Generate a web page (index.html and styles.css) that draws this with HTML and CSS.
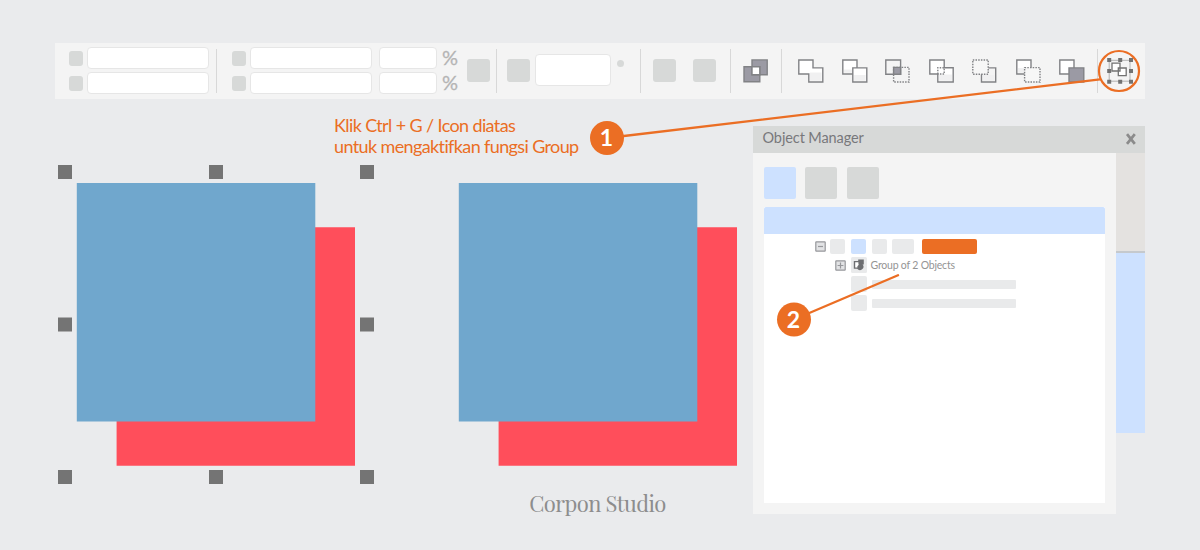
FILE: index.html
```html
<!DOCTYPE html>
<html lang="id">
<head>
<meta charset="utf-8">
<title>Group Objects</title>
<link rel="stylesheet" href="styles.css">
</head>
<body>
<header class="toolbar">
  <div class="pair first"><i class="chip"></i><i class="field"></i><i class="chip"></i><i class="field"></i></div>
  <i class="sep s1"></i>
  <div class="pair second"><i class="chip"></i><i class="field"></i><i class="chip"></i><i class="field"></i></div>
  <div class="percents"><i class="field"></i><span>%</span><i class="field"></i><span>%</span></div>
  <i class="tile t1"></i>
  <i class="sep s2"></i>
  <i class="tile t2"></i>
  <i class="field tall"></i>
  <i class="degree"></i>
  <i class="sep s3"></i>
  <i class="tile t3"></i>
  <i class="tile t4"></i>
  <i class="sep s4"></i>
  <svg class="icon combine" viewBox="0 0 26 24"><path class="dark" d="M9 .9H24.2V15.7H9ZM1 7.7H16.8V22.8H1Z"/><path class="light" d="M9 7.7H16.8V15.7H9Z"/></svg>
  <i class="sep s5"></i>
  <svg class="icon shape1" viewBox="0 0 26 24"><path class="light" d="M.8 1H15V8.9H24.8V23H10.8V15H.8Z"/><path class="shade" d="M12 13.5H23.6V21.8H12Z"/></svg>
  <svg class="icon" viewBox="0 0 26 24"><path class="light" d="M.8 1H15V15H.8Z"/><path class="shade" d="M2 10.5H10V13.8H2Z"/><path class="light" d="M10.8 8.9H24.8V23H10.8Z"/><path class="shade" d="M12 16H23.6V21.8H12Z"/></svg>
  <svg class="icon" viewBox="0 0 26 24"><path class="pale" d="M.8 1H15.6V15.2H.8Z"/><path class="dots" d="M8.6 8.4H24V23H8.6Z"/><path class="dark" d="M8.6 8.4H15.6V15.2H8.6Z"/></svg>
  <svg class="icon" viewBox="0 0 26 24"><path class="light" d="M.8 1H15.2V8.8H24.2V23H8.8V15H.8Z"/><path class="shade" d="M10 15.5H23V21.8H10Z"/><path class="dots" d="M8.8 15V8.8H15.2V15Z"/></svg>
  <svg class="icon" viewBox="0 0 26 24"><path class="pale" d="M9.5 8.9H23.7V23H9.5Z"/><path class="shade" d="M10.7 16H22.5V21.8H10.7Z"/><path class="dots blank" d="M.8 1H16.2V15.2H.8Z"/></svg>
  <svg class="icon" viewBox="0 0 26 24"><path class="light" d="M.8 1H15V15H.8Z"/><path class="shade" d="M2 9H8V13.8H2Z"/><path class="dots blank" d="M8.6 8.6H24V23H8.6Z"/></svg>
  <svg class="icon" viewBox="0 0 26 24"><path class="light" d="M.8 1H15V15H.8Z"/><path class="dark" d="M10 8.9H24.8V23H10Z"/></svg>
  <i class="sep s6"></i>
  <svg class="group-icon" viewBox="0 0 27 27"><path class="guide" d="M3.2 3.3H24V24.2H3.2Z"/><path class="mini" d="M12.3 11H20.2V18.7H12.3ZM6 6.2H14V14H6Z"/><path class="knobs" d="M1.2 1h4v4h-4ZM12.2 1h4v4h-4ZM23 1h4v4h-4ZM1.2 12h4v4h-4ZM23 12h4v4h-4ZM1.2 22.7h4v4h-4ZM12.2 22.7h4v4h-4ZM23 22.7h4v4h-4Z"/></svg>
</header>

<main class="workspace">
  <section class="stage">
    <p class="note">Klik Ctrl + G / Icon diatas<br><span>untuk mengaktifkan fungsi Group</span></p>
    <div class="canvas">
      <svg class="artwork" width="316" height="320" viewBox="58 165 316 320">
        <path class="red" d="M116.6 227.2H355V465.7H116.6Z"/><path class="blue" d="M76.8 183H315.3V421.6H76.8Z"/>
        <path class="handles" d="M58 165h14v14h-14ZM209 165h14v14h-14ZM360 165h14v14h-14ZM58 317.5h14v14h-14ZM360 317.5h14v14h-14ZM58 470h14v14h-14ZM209 470h14v14h-14ZM360 470h14v14h-14Z"/>
      </svg>
      <svg class="artwork" width="279" height="320" viewBox="458 165 279 320">
        <path class="red" d="M498.6 227.2H737V465.7H498.6Z"/><path class="blue" d="M458.8 183H697.3V421.6H458.8Z"/>
      </svg>
    </div>
    <p class="brand">Corpon Studio</p>
  </section>

  <aside class="manager">
    <header class="titlebar"><h1>Object Manager</h1><svg class="close" viewBox="0 0 12 12"><path d="M2 1.2 9.8 10.8M9.8 1.2 2 10.8"/></svg></header>
    <div class="manager-body">
      <div class="content">
        <div class="buttons"><i class="active"></i><i></i><i></i></div>
        <div class="list">
          <div class="list-head"></div>
          <div class="row layer">
            <svg class="toggle" viewBox="0 0 11 11"><rect x=".8" y=".8" width="9.4" height="9.4" rx=".5"/><path d="M3 5.5h5"/></svg>
            <i class="cell"></i><i class="cell selected"></i><i class="cell"></i><i class="cell wide"></i><i class="tag"></i>
          </div>
          <div class="row object">
            <svg class="toggle" viewBox="0 0 11 11"><rect x=".8" y=".8" width="9.4" height="9.4" rx=".5"/><path d="M2.6 5.5h5.8M5.5 2.6v5.8"/></svg>
            <svg class="thumb" viewBox="0 0 16 16"><rect class="plate" width="16" height="16" rx="1.5"/><path d="M2.8 4H7.2V2.6H12.8V7.4H11.6A3.3 3.3 0 1 1 6.2 11.8H2.8Z"/><path class="hole" d="M4.2 5.2H7.4V7.6H8L6.4 9.2V10.4H4.2Z"/></svg>
            <span>Group of 2 Objects</span>
          </div>
          <div class="row child"><i class="cell"></i><i class="line"></i></div>
          <div class="row child"><i class="cell"></i><i class="line"></i></div>
        </div>
      </div>
      <div class="scroll"><i class="track"></i><i class="grip"></i></div>
    </div>
  </aside>
</main>

<svg class="callouts" viewBox="0 0 1200 550">
  <path d="M607 138 1100 79.3M794 319.5 898 275.3"/>
  <circle class="ring" cx="1119" cy="71" r="20"/>
  <circle cx="607" cy="138" r="17"/><circle cx="794" cy="319.5" r="17"/>
  <text x="606.5" y="146">1</text><text x="793.5" y="327.5">2</text>
</svg>
</body>
</html>
```

FILE: styles.css
```css
* { box-sizing: border-box; }
body { margin: 0; width: 1200px; height: 550px; overflow: hidden; position: relative; padding-top: 43px; background: #eaebed; font-family: Lato, sans-serif; }
i { display: block; flex: none; font-style: normal; }
svg { display: block; flex: none; }
p, h1 { margin: 0; }

.toolbar { display: flex; align-items: center; width: 1090px; height: 55.5px; margin-left: 55px; padding-left: 14px; background: #f4f4f4; }
.pair { display: grid; grid-template-columns: 14px 122px; gap: 3px 4px; align-items: center; flex: none; }
.second { margin-left: 15px; }
.field { height: 22px; background: #fff; border: 1px solid #e6e6e6; border-radius: 4px; }
.chip { height: 14.5px; background: #d7d9d8; border-radius: 3px; }
.percents { display: grid; grid-template-columns: 58px 17px; gap: 3px 6px; margin-left: 7px; flex: none; align-items: center; color: #b4b4b4; }
.percents span { font-size: 20px; line-height: 20px; height: 22px; margin-left: -1px; -webkit-text-stroke: .3px #b4b4b4; }
.sep { width: 1px; height: 44px; background: #d8d8d8; }
.tile { width: 23px; height: 23px; background: #d7d9d8; border-radius: 3px; }
.s1 { margin-left: 7px; }
.t1 { margin-left: 6.5px; }
.s2 { margin-left: 6px; }
.t2 { margin-left: 10.5px; }
.tall { width: 76px; height: 32px; margin-left: 5px; margin-top: -1px; }
.degree { width: 7px; height: 7px; margin: -15px 0 0 6px; background: #d7d9d8; border-radius: 50%; }
.s3 { margin-left: 16px; }
.t3 { margin-left: 12px; }
.t4 { margin-left: 16.5px; }
.s4 { margin-left: 14px; }
.s5 { margin-left: 12px; }
.s6 { margin-left: 12px; }

.icon { width: 26px; height: 24px; margin-left: 17.5px; fill: none; stroke: #818285; stroke-width: 1.4; }
.combine { margin-left: 12.5px; }
.shape1 { margin-left: 16px; }
.dark { fill: #9b9aa4; }
.light { fill: #fff; }
.pale { fill: #f4f4f4; }
.shade { fill: #f0f0f1; stroke: none; }
.dots { stroke-dasharray: 1.5 1.2; }
.blank { fill: #f7f7f7; }
.group-icon { width: 27px; height: 27px; margin-left: 7.5px; margin-top: -1px; fill: none; }
.guide { stroke: #aaa; stroke-width: .9; }
.mini { fill: #fff; stroke: #727272; stroke-width: 1.3; }
.knobs { fill: #727272; }

.workspace { display: flex; height: 451px; }
.stage { width: 752.5px; padding-top: 16.5px; flex: none; }
.note { margin-left: 334px; color: #eb6e24; font-size: 18px; line-height: 21px; letter-spacing: -.62px; white-space: nowrap; }
.canvas { display: flex; gap: 84px; margin: 8px 0 0 58px; }
.red { fill: #ff4e5b; }
.blue { fill: #70a7cd; }
.handles { fill: #747474; }
.brand { width: 200px; margin: 4px 0 0 497.5px; color: #8d8d8d; font: 22px/28px "Playfair Display", "Liberation Serif", serif; letter-spacing: -.6px; text-align: center; white-space: nowrap; }

.manager { width: 392px; padding-top: 27px; flex: none; }
.titlebar { display: flex; align-items: center; justify-content: space-between; height: 27px; padding: 0 8px 0 10px; background: #d7d9d8; }
.titlebar h1 { color: #77787b; font-size: 14.5px; font-weight: 400; line-height: 20px; margin-top: -2px; letter-spacing: -.1px; }
.close { width: 12px; height: 12px; stroke: #8b8b8b; stroke-width: 2.7; fill: none; }
.manager-body { display: flex; }
.content { width: 363.5px; height: 361.5px; padding: 14px 11px 0 11px; background: #f4f4f4; }
.buttons { display: flex; gap: 9.5px; height: 32px; }
.buttons i { width: 32px; background: #d7d9d8; border-radius: 2px; }
.buttons .active { background: #cde1ff; }
.list { height: 296px; margin-top: 8.5px; background: #fff; }
.list-head { height: 26.5px; background: #cde1ff; border-radius: 2px 2px 0 0; }
.row { display: flex; align-items: center; height: 19px; }
.layer { height: 18px; margin-top: 4px; padding-left: 51.5px; }
.toggle { width: 11px; height: 11px; fill: #e2e3e5; stroke: #97989c; stroke-width: 1.2; margin-right: 4px; }
.cell { width: 15px; height: 15px; background: #e9eaeb; border-radius: 2px; }
.cell + .cell { margin-left: 6px; }
.selected { background: #cde1ff; }
.cell.wide { width: 22px; margin-left: 5px; }
.tag { width: 55px; height: 15px; margin-left: 8px; background: #eb6e24; border-radius: 2px; }
.object { padding-left: 71px; }
.object .toggle { margin-right: 5px; }
.thumb { width: 16px; height: 16px; fill: #6d6e71; }
.plate { fill: #e9eaeb; }
.thumb .hole { fill: #fff; }
.row span { margin: -1px 0 0 4px; color: #949494; font-size: 10.5px; letter-spacing: -.2px; line-height: 14px; white-space: nowrap; }
.child { padding-left: 87px; }
.child .cell { width: 16px; height: 16px; }
.line { width: 144px; height: 9px; margin-left: 5px; background: #e9eaeb; border-radius: 1px; }
.scroll { width: 28.5px; }
.track { height: 100.5px; background: #e4e2e0; border-bottom: 2px solid #c5c9cd; }
.grip { height: 180px; background: #cde1ff; }

.callouts { position: absolute; inset: 0; width: 1200px; height: 550px; fill: #eb6e24; pointer-events: none; }
.callouts path { stroke: #eb6e24; stroke-width: 2.3; fill: none; stroke-linecap: round; }
.callouts .ring { fill: none; stroke: #eb6e24; stroke-width: 2.2; }
.callouts text { fill: #fff; font: bold 23px Lato, sans-serif; text-anchor: middle; }
```
